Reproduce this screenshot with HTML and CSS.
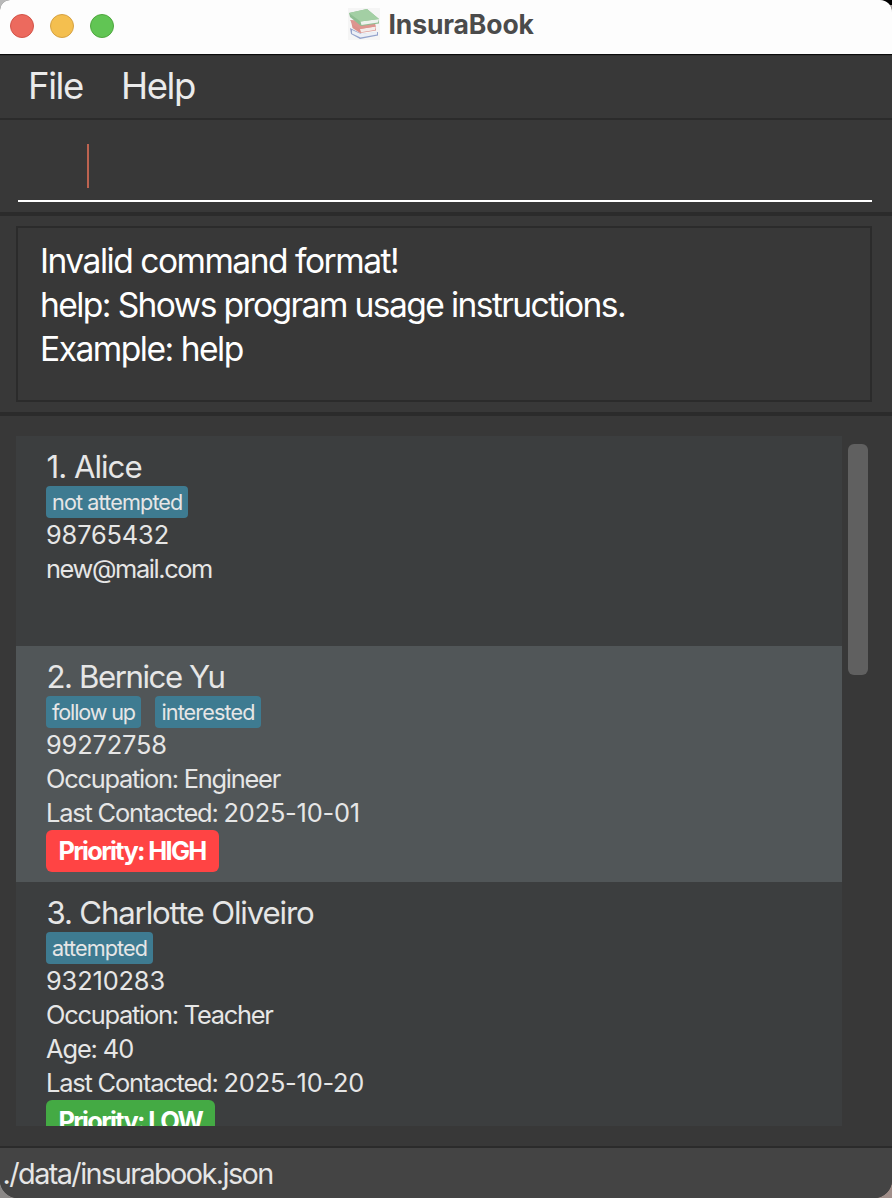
FILE: index.html
```
<!DOCTYPE html>
<html lang="en">
<head>
<meta charset="utf-8">
<title>InsuraBook</title>
<link rel="stylesheet" href="styles.css">
</head>
<body>
<div class="window">
  <header class="titlebar">
    <div class="lights">
      <span class="light close"></span>
      <span class="light minimize"></span>
      <span class="light maximize"></span>
    </div>
    <div class="title">
      <svg class="books" viewBox="0 0 32 32" width="32" height="32">
        <rect width="32" height="32" fill="#f5f5f5"/>
        <path d="M2 20 L3 26 L12 31 L30 27.500 L30 24 L14 26Z" fill="#93a2cb"/>
        <path d="M4 22 L13 26 L29 23.500 L29 26.500 L12.500 29.500 L4 25.500Z" fill="#eceff5"/>
        <path d="M3 13 L4.500 20 L12 25 L28 22.500 L27 14Z" fill="#dc908a"/>
        <path d="M12 21 L27.500 18.500 L27 22 L13 24.200Z" fill="#f3ebe9"/>
        <path d="M2 12 L5 17 L12 21 L28 18.500 L24 13Z" fill="#dd958f"/>
        <path d="M1 5 L19 1 L31 11 L31 15.500 L13 18 L2 9Z" fill="#8fbe92"/>
        <path d="M12.500 13.500 L31 11 L30 14.500 L13.500 17Z" fill="#eef3ee"/>
        <path d="M1 5 L19 1 L31 11 L12.500 13.500Z" fill="#a3cfa4"/>
      </svg>
      <span class="title-text">InsuraBook</span>
    </div>
  </header>
  <nav class="menubar">
    <span>File</span>
    <span>Help</span>
  </nav>
  <section class="command">
    <div class="command-field"><span class="caret"></span></div>
  </section>
  <section class="result">
    <div class="result-box">
      <div>Invalid command format!</div>
      <div class="tight">help: Shows program usage instructions.</div>
      <div>Example: help</div>
    </div>
  </section>
  <main class="content">
    <div class="list">
      <article class="card">
        <h2 class="name name-a">1. Alice</h2>
        <div class="tags"><span class="tag">not attempted</span></div>
        <p class="num">98765432</p>
        <p class="mail">new@mail.com</p>
      </article>
      <article class="card even">
        <h2 class="name name-b">2. Bernice Yu</h2>
        <div class="tags"><span class="tag follow">follow up</span><span class="tag">interested</span></div>
        <p class="num">99272758</p>
        <p>Occupation: Engineer</p>
        <p class="contacted">Last Contacted: <span class="num">2025-10-01</span></p>
        <div class="priority high">Priority: HIGH</div>
      </article>
      <article class="card">
        <h2 class="name">3. Charlotte Oliveiro</h2>
        <div class="tags"><span class="tag">attempted</span></div>
        <p class="num">93210283</p>
        <p>Occupation: Teacher</p>
        <p class="age">Age: 40</p>
        <p class="contacted">Last Contacted: <span class="num">2025-10-20</span></p>
        <div class="priority low">Priority: LOW</div>
      </article>
    </div>
    <div class="scrollbar"><div class="thumb"></div></div>
  </main>
  <footer class="status">./data/insurabook.json</footer>
</div>
</body>
</html>
```
FILE: styles.css
```
* {
  box-sizing: border-box;
}

body {
  margin: 0;
  height: 1198px;
  overflow: hidden;
  font-family: Inter, "Liberation Sans", sans-serif;
  font-kerning: normal;
  background:
    linear-gradient(#000, #000) right top / 20px 5px no-repeat,
    linear-gradient(#a59b98, #a59b98) right top / 20px 20px no-repeat,
    linear-gradient(#b9b9b9, #b9b9b9) left top / 20px 20px no-repeat,
    linear-gradient(90deg, #8b8887, #8b7f7c 60%, #a08e89);
}

.window {
  display: flex;
  flex-direction: column;
  height: 1198px;
  background: #383838;
  border-radius: 10px 12px 18px 18px;
  overflow: hidden;
  white-space: nowrap;
}

.titlebar {
  display: grid;
  grid-template-columns: 338px 1fr;
  height: 55px;
  background: #fdfdfd;
  border-bottom: 1px solid #0c0c0c;
}

.lights {
  display: flex;
  gap: 16px;
  padding: 14px 10px;
}

.light {
  width: 24px;
  height: 24px;
  border-radius: 50%;
}

.close {
  background: #ec6a5e;
  border: 1px solid #d35449;
}

.minimize {
  background: #f4bf4f;
  border: 1px solid #d6a243;
}

.maximize {
  background: #61c554;
  border: 1px solid #4fa73f;
}

.title {
  display: flex;
  align-items: flex-start;
  gap: 8.500px;
  padding: 8px 0 0 10px;
}

.title-text {
  font-size: 26.5px;
  font-weight: 700;
  line-height: 32px;
  letter-spacing: -0.12px;
  color: #4b4b4b;
}

.menubar {
  display: flex;
  gap: 38px;
  height: 65px;
  padding-left: 28px;
  border-top: 1px solid #303030;
  border-bottom: 2px solid #2b2b2b;
  font-size: 36.5px;
  line-height: 61px;
  letter-spacing: -1.4px;
  color: #ebebeb;
}

.command {
  height: 96px;
  padding: 24px 20px 10px 18px;
  border-bottom: 4px solid #2b2b2b;
}

.command-field {
  height: 58px;
  padding-left: 69px;
  border-bottom: 2px solid #fff;
}

.caret {
  display: block;
  width: 2px;
  height: 44px;
  background: #bd6350;
}

.result {
  height: 200px;
  padding: 10px 20px 10px 16px;
  border-bottom: 4px solid #2b2b2b;
}

.result-box {
  height: 176px;
  padding: 11px 0 0 22px;
  border: 2px solid #2b2b2b;
  font-size: 33.6px;
  line-height: 44px;
  letter-spacing: -1.5px;
  color: #fff;
}

.tight {
  letter-spacing: -1.6px;
}

.content {
  display: flex;
  gap: 6px;
  height: 730px;
  padding: 20px 0 20px 16px;
}

.list {
  width: 826px;
  height: 690px;
  overflow: hidden;
  background: #3c3e3f;
}

.card {
  display: flex;
  flex-direction: column;
  align-items: flex-start;
  min-height: 210px;
  padding: 10px 30px;
  font-size: 25.4px;
  line-height: 34px;
  letter-spacing: -1.24px;
  color: #e6e6e6;
}

.card.even {
  background: #515658;
}

.card p {
  margin: 0;
}

.name {
  margin: 0;
  padding-left: 0.500px;
  font-size: 31.2px;
  font-weight: 400;
  line-height: 42.500px;
  height: 40px;
  letter-spacing: -1.16px;
}

.card .name-a {
  letter-spacing: -1px;
}

.card .name-b {
  letter-spacing: -1.44px;
}

.tags {
  display: flex;
  gap: 14px;
  height: 32px;
}

.tag {
  padding: 0 6px;
  border-radius: 4px;
  background: #3e7b91;
  font-size: 21.6px;
  line-height: 32px;
  letter-spacing: -0.87px;
}

.follow {
  padding-right: 6.500px;
  letter-spacing: -1.13px;
}

.num {
  letter-spacing: -0.15px;
}

.mail {
  letter-spacing: -1.4px;
}

.contacted {
  letter-spacing: -1.17px;
}

.contacted .num {
  letter-spacing: -0.22px;
}

.age {
  letter-spacing: -1.1px;
}

.priority {
  height: 42px;
  padding: 0 13px 0 12.500px;
  border-radius: 6px;
  font-weight: 700;
  line-height: 42px;
  letter-spacing: -1.68px;
  color: #fff;
}

.high {
  background: #ff4444;
}

.low {
  background: #44aa44;
}

.scrollbar {
  width: 20px;
  padding-top: 8px;
}

.thumb {
  height: 231px;
  border-radius: 6px;
  background: #606060;
}

.status {
  height: 52px;
  padding-left: 2.500px;
  border-top: 2px solid #2b2b2b;
  background: #444;
  font-size: 28.8px;
  line-height: 51px;
  letter-spacing: -1.56px;
  color: #e6e6e6;
}
```
